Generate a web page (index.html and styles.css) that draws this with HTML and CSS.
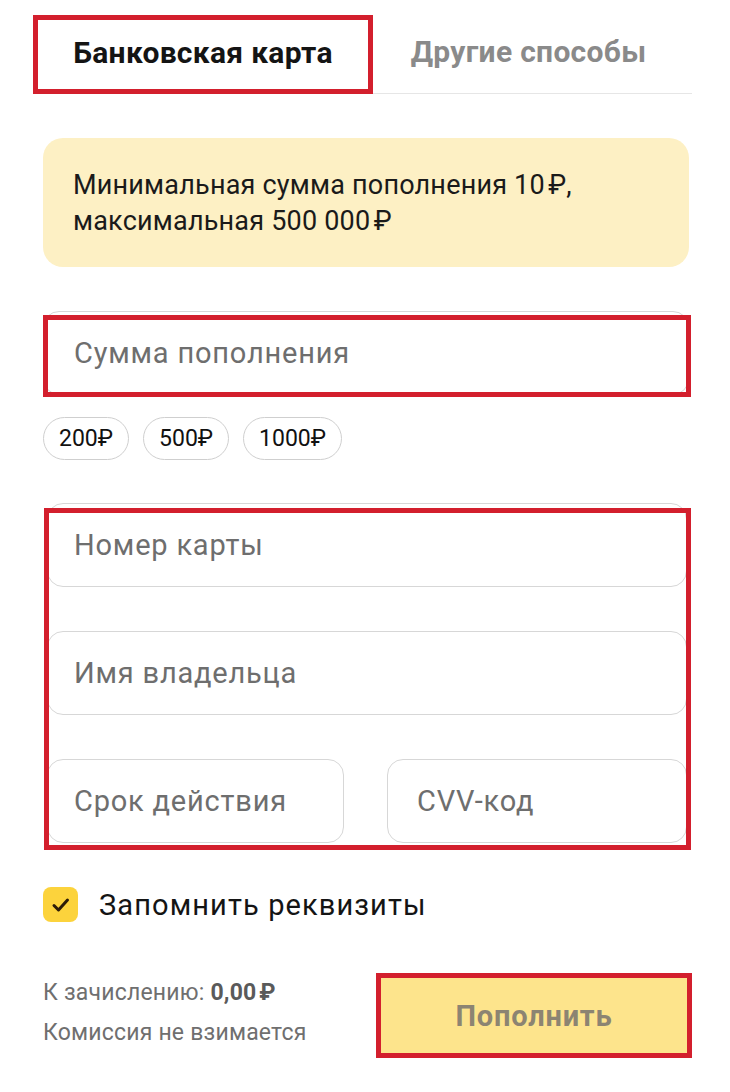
FILE: index.html
```html
<!DOCTYPE html>
<html>
    <head>
        <meta charset="utf-8">
        <link rel="stylesheet" href="styles.css">
    </head>
<body>
<div class="page">
    <div class="tabs">
        <div class="tab tab-active">Банковская карта</div>
        <div class="tab">Другие способы</div>
    </div>

    <div class="notice">Минимальная сумма пополнения 10&#8239;₽,<br>максимальная 500&nbsp;000&#8239;₽</div>

    <div class="mark mark-sum">
        <input class="field" type="text" placeholder="Сумма пополнения">
    </div>

    <div class="chips">
        <button class="chip">200₽</button>
        <button class="chip">500₽</button>
        <button class="chip">1000₽</button>
    </div>

    <div class="card mark mark-card">
        <input class="field field-card" type="text" placeholder="Номер карты">
        <input class="field field-card" type="text" placeholder="Имя владельца">
        <div class="field-row">
            <input class="field field-card" type="text" placeholder="Срок действия">
            <input class="field field-card" type="text" placeholder="CVV-код">
        </div>
    </div>

    <label class="remember">
        <span class="checkbox">
            <svg width="35" height="35" viewBox="0 0 35 35"><path d="M11 18.5l4.5 4.5 9-10" fill="none" stroke="#2b1b08" stroke-width="3" stroke-linecap="round" stroke-linejoin="round"/></svg>
        </span>
        Запомнить реквизиты
    </label>

    <div class="summary">
        <div class="totals">
            <div>К зачислению: <b>0,00&#8239;₽</b></div>
            <div>Комиссия не взимается</div>
        </div>
        <button class="submit mark">Пополнить</button>
    </div>
</div>
</body>
</html>
```

FILE: styles.css
```css
:root {
    --annot-red: #d31f2d;
    --field-border: #d7d7d7;
    --placeholder: #6e6e6e;
    --yellow-soft: #fdf0c4;
    --yellow: #fcd33c;
}

body {
    margin: 0;
    background: #fff;
    font-family: Roboto, 'Liberation Sans', sans-serif;
    color: #151515;
}

.page {
    width: 730px;
    box-sizing: border-box;
    padding: 15px 41px 0 43px;
}

/* Tabs */
.tabs {
    display: flex;
    margin: 0 -3px 0 -10px;
    border-bottom: 1px solid #e6e6e6;
    height: 78px;
}

.tab {
    display: flex;
    align-items: center;
    justify-content: center;
    font-size: 30px;
    font-weight: 700;
    letter-spacing: 0.3px;
    color: #8a8a8a;
    padding-bottom: 5px;
    box-sizing: border-box;
}

.tab + .tab {
    flex: 1;
    padding-right: 8px;
}

.tab-active {
    width: 340px;
    height: 79px;
    color: #141414;
    border: 5px solid var(--annot-red);
}

/* Info box */
.notice {
    margin-top: 44px;
    background: var(--yellow-soft);
    border-radius: 20px;
    padding: 29px 30px 28px;
    font-size: 27px;
    letter-spacing: 0.2px;
    line-height: 36px;
    color: #1a1a1a;
}

/* Red annotation frames */
.mark {
    position: relative;
}

.mark::after {
    content: '';
    position: absolute;
    border: 5px solid var(--annot-red);
    pointer-events: none;
}

.mark-sum {
    margin-top: 44px;
}

.mark-sum::after {
    top: 4px;
    bottom: -2px;
    left: 0;
    right: -2px;
}

.mark-card::after {
    top: 5px;
    bottom: -7px;
    left: -3px;
    right: -4px;
}

/* Fields */
.field {
    display: block;
    width: 100%;
    height: 84px;
    box-sizing: border-box;
    border: 1px solid var(--field-border);
    border-radius: 16px;
    padding: 0 30px;
    font-family: inherit;
    font-size: 29px;
    letter-spacing: 0.8px;
    color: #151515;
    background: #fff;
    outline: none;
}

.field::placeholder {
    color: var(--placeholder);
}

.card {
    margin: 43px 2px 0 4px;
    display: flex;
    flex-direction: column;
    gap: 44px;
}

.field-card {
    padding: 0 26px;
}

.field-row {
    display: flex;
    gap: 43px;
}

.field-row .field {
    flex: 1;
    min-width: 0;
}

.field-row .field + .field {
    padding-left: 29px;
}

/* Amount chips */
.chips {
    display: flex;
    gap: 14px;
    margin-top: 22px;
}

.chip {
    height: 43px;
    padding: 0 15px;
    border: 1px solid #cfcfcf;
    border-radius: 22px;
    background: #fff;
    font-family: inherit;
    font-size: 23px;
    color: #111;
}

/* Remember checkbox */
.remember {
    display: flex;
    align-items: center;
    gap: 21px;
    margin-top: 44px;
    font-size: 29px;
    letter-spacing: 1.1px;
    color: #141414;
}

.checkbox {
    width: 35px;
    height: 35px;
    border-radius: 8px;
    background: var(--yellow);
    display: flex;
}

/* Summary + button */
.summary {
    display: flex;
    justify-content: space-between;
    align-items: flex-start;
    margin-top: 51px;
    margin-right: -3px;
}

.totals {
    font-size: 23px;
    letter-spacing: 0.2px;
    line-height: 40px;
    color: #6f6f6f;
}

.totals b {
    color: #5a5a5a;
}

.submit {
    width: 316px;
    height: 85px;
    border: 0;
    border-radius: 6px;
    background: #fde48c;
    font-family: inherit;
    font-size: 29px;
    font-weight: 700;
    letter-spacing: 0.8px;
    color: #8c8472;
    padding: 0;
}

.submit::after {
    inset: 0;
}
```
